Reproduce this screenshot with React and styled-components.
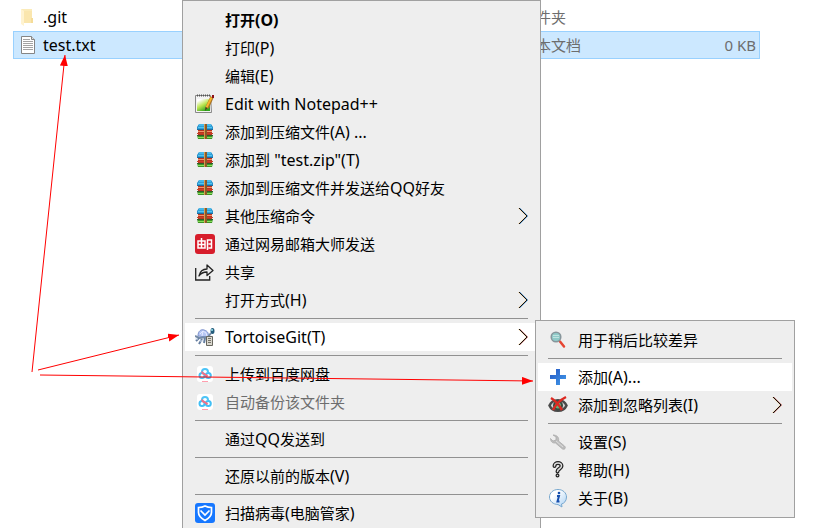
import React from "react";
import styled, { createGlobalStyle, css } from "styled-components";

const GlobalStyle = createGlobalStyle`
  * { box-sizing: border-box; }
  body {
    margin: 0;
    background: #fff;
    color: #000;
    font: 15px/28px "Noto Sans", "Noto Sans CJK SC", sans-serif;
  }
`;

const Desktop = styled.main`
  position: relative;
  height: 100vh;
  overflow: hidden;
  padding: 3px 80px 0 13px;
`;

const FileTable = styled.table`
  width: 100%;
  table-layout: fixed;
  border-collapse: collapse;
`;

const FileRow = styled.tr`
  height: 28px;
  line-height: 24px;
  ${(p) =>
    p.$selected &&
    css`
      background: #cce8ff;
      outline: 1px solid #99d1ff;
      outline-offset: -1px;
    `}
`;

const Cell = styled.td`
  width: ${(p) => p.$width};
  padding: 0 4px 0 0;
  color: ${(p) => (p.$muted ? "#6d6d6d" : "#000")};
  text-align: ${(p) => p.$align || "left"};
  white-space: nowrap;
`;

const FileName = styled.span`
  display: flex;
  align-items: center;
  gap: 6px;
  padding-left: 6px;
`;

const Latin = styled.span`
  font-size: 16px;
  line-height: 20px;
`;

const Menu = styled.div`
  position: absolute;
  left: ${(p) => p.$x}px;
  top: ${(p) => p.$y}px;
  min-width: ${(p) => p.$minWidth}px;
  padding: 5px 2px;
  border: 1px solid #a0a0a0;
  background: #eee;
`;

const MenuButton = styled.button`
  display: flex;
  align-items: center;
  gap: 10px;
  width: 100%;
  height: 28px;
  padding: 0 10px;
  border: 0;
  background: ${(p) => (p.$active ? "#fff" : "transparent")};
  color: #000;
  font: inherit;
  font-weight: ${(p) => (p.$bold ? 700 : 400)};
  text-align: left;
  white-space: nowrap;
  &:disabled {
    color: #6d6d6d;
  }
`;

const IconSlot = styled.span`
  display: flex;
  flex: 0 0 20px;
  align-items: center;
  justify-content: center;
  height: 20px;
`;

const Label = styled.span`
  flex: 1;
`;

const Divider = styled.hr`
  height: 1px;
  margin: 4px 10px;
  border: 0;
  background: #919191;
`;

const Overlay = styled.svg`
  position: absolute;
  left: 0;
  top: 0;
  pointer-events: none;
`;

// Latin runs are set one pixel larger than the Chinese text around them.
const MixedText = ({ children }) =>
  children
    .split(/([\x20-\x7e]+)/)
    .filter(Boolean)
    .map((run, i) => (/^[\x20-\x7e]/.test(run) ? <Latin key={i}>{run}</Latin> : run));

const Svg = ({ children, size = 20 }) => (
  <svg width={size} height={size} viewBox={`0 0 ${size} ${size}`} fill="none" aria-hidden="true">
    {children}
  </svg>
);

const FolderIcon = () => (
  <svg width="18" height="20" viewBox="0 0 18 20" aria-hidden="true">
    <path d="M2 2h11v14H2z" fill="#fbebb9" />
    <path d="M2 2l3 2v15l-3-2z" fill="#fff3d0" />
    <path d="M5 4h8v12H5z" fill="#fae6ae" />
    <path d="M12 11h2v5h-2z" fill="#f5dc98" />
  </svg>
);

const TextFileIcon = () => (
  <svg width="18" height="20" viewBox="0 0 18 20" aria-hidden="true">
    <path d="M2.500 1.500h10l3 3v14h-13z" fill="#fff" stroke="#858585" />
    <path d="M12.500 1.500v3h3" fill="#ddd" stroke="#858585" />
    <path d="M4 4.500h7M4 6.500h10M4 8.500h10M4 10.500h10M4 12.500h10M4 14.500h10" stroke="#a3a3a3" />
  </svg>
);

const NotepadIcon = () => (
  <Svg>
    <defs>
      <linearGradient id="noteGreen" x1="0" y1="0" x2="0.600" y2="1">
        <stop offset="0.150" stopColor="#fff" />
        <stop offset="0.550" stopColor="#bfe654" />
        <stop offset="1" stopColor="#2fa51c" />
      </linearGradient>
    </defs>
    <path d="M0.500 1.500h15l1 17h-16z" fill="#f4f4f4" stroke="#888" />
    <path d="M2 5h13v12H2z" fill="url(#noteGreen)" />
    <path d="M2 1.500h13" stroke="#555" strokeWidth="2" strokeDasharray="1 1" />
    <path d="M17 3L12 14" stroke="#a87324" strokeWidth="3.500" />
    <path d="M16.500 3.500L11.500 13.500" stroke="#f8b42c" strokeWidth="2" />
    <path d="M10.500 13l2 1-2.500 3z" fill="#4a3a20" />
    <path d="M17 1h2v3h-2z" fill="#8d0d16" />
  </Svg>
);

const ArchiveIcon = () => (
  <Svg>
    <path d="M4 2h12l2 3v3H2V5z" fill="#2490cc" />
    <path d="M4 3h12M3 5.500h14" stroke="#52c5f2" strokeWidth="1.500" />
    <path d="M2 7.500h16" stroke="#1e6b9c" />
    <path d="M3 8h14v5H3z" fill="#b93421" />
    <path d="M3 9.500h14" stroke="#f09468" />
    <path d="M2 11.500h16" stroke="#cb4026" />
    <path d="M2 13h16l-1 4H3z" fill="#3c9427" />
    <path d="M2 13.500h16" stroke="#315c28" />
    <path d="M3 15.500h14" stroke="#89dd59" />
    <path d="M9 2h3v15H9z" fill="#8b5a28" />
    <path d="M9.500 2v15" stroke="#d79c4e" />
  </Svg>
);

const MailIcon = () => (
  <Svg>
    <rect width="20" height="20" rx="3" fill="#d71d2b" />
    <path d="M3 7h7v7H3zM3 10.500h7M6.500 4v10" stroke="#fff" strokeWidth="1.500" />
    <path d="M12.500 16V6h4v4h-3M16.500 10v4h-3" stroke="#fff" strokeWidth="1.500" />
  </Svg>
);

const ShareIcon = () => (
  <Svg>
    <path d="M0.700 6v12h14v-4" stroke="#222" strokeWidth="1.300" />
    <path d="M4 14c1-5 4-7 8-7V3l6 5.500-6 5V10c-3 0-6 1-8 4z" stroke="#222" strokeWidth="1.300" strokeLinejoin="round" />
  </Svg>
);

const TortoiseIcon = () => (
  <Svg>
    <path d="M3 9C3 4 6 2 9 3c4 1 5 4 4 7z" fill="#b6c6f4" stroke="#7c91cb" />
    <path d="M5 7l3-3 3 2 1 3M8 4l-1 5" stroke="#e3e9ff" />
    <path d="M0 9l4 2 9-1 3-4" stroke="#758ba6" strokeWidth="2" />
    <ellipse cx="17.500" cy="4" rx="2" ry="3" fill="#245c7c" />
    <circle cx="17" cy="3" r="1" fill="#9ce4ee" />
    <path d="M4 11l-3 3M7 12l-3 5M10 11l-1 5" stroke="#657ea0" strokeWidth="2" />
    <path d="M0 12h3M5 14h3" stroke="#dbe5f4" />
    <path d="M11.500 9.500h6v9h-6z" fill="#d9d7ce" stroke="#68675f" />
    <path d="M13 11.500h3M13 13.500h3M13 15.500h3" stroke="#77756c" />
  </Svg>
);

const CloudIcon = () => (
  <Svg>
    <rect x="2" y="2" width="16" height="16" rx="3" fill="#fff" />
    <path d="M7 8a3 3 0 0 1 6 0" stroke="#4cc4f7" strokeWidth="2" />
    <circle cx="7" cy="11.500" r="2.500" stroke="#41bff5" strokeWidth="2" />
    <circle cx="13.300" cy="11.500" r="2.500" stroke="#41bff5" strokeWidth="2" />
    <path d="M7 7.500c0 3 4 2 5.500 5" stroke="#f46f86" strokeWidth="2" />
    <path d="M7 17.500h6" stroke="#ff9eae" />
  </Svg>
);

const ShieldIcon = () => (
  <Svg>
    <rect width="20" height="20" rx="3" fill="#1677ff" />
    <path d="M3.500 4.500c3 0 4.500-.5 6.500-1.500 2 1 3.500 1.500 6.500 1.500v5c0 3.500-3 6-6.500 8-3.500-2-6.500-4.500-6.500-8z" stroke="#fff" strokeWidth="1.700" />
    <path d="M5.500 7.500L10 12l4.500-4.500" stroke="#fff" strokeWidth="1.700" />
  </Svg>
);

const SearchIcon = () => (
  <Svg>
    <path d="M12 11.500l4 5" stroke="#e64532" strokeWidth="2.500" strokeLinecap="round" />
    <circle cx="8" cy="7" r="4.800" fill="#8fcac8" stroke="#87959b" strokeWidth="1.500" />
    <path d="M5 5.500h6M5 7.500h6" stroke="#bfe3e0" />
  </Svg>
);

const PlusIcon = () => (
  <Svg>
    <defs>
      <linearGradient id="plusBlue" x1="0" y1="0" x2="1" y2="1">
        <stop stopColor="#2557c4" />
        <stop offset="1" stopColor="#429bea" />
      </linearGradient>
    </defs>
    <path d="M8 2h4v6h6v4h-6v6H8v-6H2V8h6z" fill="url(#plusBlue)" />
  </Svg>
);

const IgnoreIcon = () => (
  <Svg>
    <path d="M1.500 10.500c3-7 14-7 17 0-3 7-14 7-17 0z" fill="#d4d4d4" stroke="#4a4a4a" strokeWidth="2.500" />
    <circle cx="10" cy="10.500" r="4" fill="#62b27a" stroke="#3b4a40" strokeWidth="2" />
    <path d="M3 3c5 3 8 7 11 12M18 2C12 5 8 9 5 15" stroke="#dc2a22" strokeWidth="2.500" />
  </Svg>
);

const WrenchIcon = () => (
  <Svg>
    <path d="M5 3l3 2v3L5 9 2.500 6.500c0 3 2 5 5 4.500l7 6c2 1 4-1 2-3l-6-5c1-4-2-6-5.500-6z" fill="#bdbdbd" stroke="#a6a6a6" strokeWidth="0.700" />
    <path d="M8 9l7 6" stroke="#ddd" />
  </Svg>
);

const HelpIcon = () => (
  <Svg>
    <path d="M6.500 6c0-4 7-4 7 0 0 3-4 2.500-4 5.500M9.500 15.500v.1" stroke="#222" strokeWidth="4" strokeLinecap="round" />
    <path d="M6.500 6c0-4 7-4 7 0 0 3-4 2.500-4 5.500M9.500 15.500v.1" stroke="#ddd" strokeWidth="1.500" strokeLinecap="round" />
  </Svg>
);

const InfoIcon = () => (
  <Svg>
    <defs>
      <linearGradient id="infoBlue" x1="0" y1="0" x2="1" y2="1">
        <stop offset="0.300" stopColor="#fff" />
        <stop offset="1" stopColor="#a8d0f4" />
      </linearGradient>
    </defs>
    <path d="M18.500 9c0 4-2.500 6.500-5 7l.5 3-4-2.500C5 16.500 1.500 13 1.500 9S5 1.500 10 1.500s8.500 3.500 8.500 7.500z" fill="url(#infoBlue)" stroke="#78a8cf" />
    <path d="M9 8h2l-1.500 5.500h2" stroke="#174fae" strokeWidth="2" />
    <circle cx="11" cy="5" r="1.300" fill="#174fae" />
  </Svg>
);

const Chevron = ({ tint }) => (
  <svg width="10" height="18" viewBox="0 0 10 18" fill="none" aria-hidden="true">
    <path d="M0.500 1l8 8-8 8" stroke="#f0c98c" />
    <path d="M1.500 1l8 8-8 8" stroke={tint} />
    <path d="M1 1l8 8-8 8" stroke="#111" />
  </svg>
);

const MAIN_MENU = [
  { label: "打开(O)", bold: true },
  { label: "打印(P)" },
  { label: "编辑(E)" },
  { label: "Edit with Notepad++", icon: NotepadIcon },
  { label: "添加到压缩文件(A) ...", icon: ArchiveIcon },
  { label: '添加到 "test.zip"(T)', icon: ArchiveIcon },
  { label: "添加到压缩文件并发送给QQ好友", icon: ArchiveIcon },
  { label: "其他压缩命令", icon: ArchiveIcon, submenu: true },
  { label: "通过网易邮箱大师发送", icon: MailIcon },
  { label: "共享", icon: ShareIcon },
  { label: "打开方式(H)", submenu: true },
  null,
  { label: "TortoiseGit(T)", icon: TortoiseIcon, submenu: true, active: true },
  null,
  { label: "上传到百度网盘", icon: CloudIcon },
  { label: "自动备份该文件夹", icon: CloudIcon, disabled: true },
  null,
  { label: "通过QQ发送到" },
  null,
  { label: "还原以前的版本(V)" },
  null,
  { label: "扫描病毒(电脑管家)", icon: ShieldIcon },
];

const GIT_MENU = [
  { label: "用于稍后比较差异", icon: SearchIcon },
  null,
  { label: "添加(A)...", icon: PlusIcon, active: true },
  { label: "添加到忽略列表(I)", icon: IgnoreIcon, submenu: true },
  null,
  { label: "设置(S)", icon: WrenchIcon },
  { label: "帮助(H)", icon: HelpIcon },
  { label: "关于(B)", icon: InfoIcon },
];

const ContextMenu = ({ items, label, x, y, minWidth, tint = "#1674c4" }) => (
  <Menu role="menu" aria-label={label} $x={x} $y={y} $minWidth={minWidth}>
    {items.map((item, i) => {
      if (!item) return <Divider key={i} />;
      const Icon = item.icon;
      return (
        <MenuButton
          key={i}
          type="button"
          role="menuitem"
          aria-haspopup={item.submenu ? "menu" : undefined}
          disabled={item.disabled}
          $bold={item.bold}
          $active={item.active}
        >
          <IconSlot>{Icon && <Icon />}</IconSlot>
          <Label>
            <MixedText>{item.label}</MixedText>
          </Label>
          {item.submenu && <Chevron tint={item.active ? "#b03a2e" : tint} />}
        </MenuButton>
      );
    })}
  </Menu>
);

const ARROWS = [
  [32, 372, 65, 55],
  [38, 370, 179, 335],
  [40, 375, 533, 381],
];

const Arrows = () => (
  <Overlay width="540" height="400" viewBox="0 0 540 400" aria-hidden="true">
    <defs>
      <marker id="head" markerUnits="userSpaceOnUse" markerWidth="12" markerHeight="10" refX="11" refY="4" orient="auto">
        <path d="M0 0l11 4-11 4z" fill="#f00" />
      </marker>
    </defs>
    {ARROWS.map(([x1, y1, x2, y2]) => (
      <line key={y2} x1={x1} y1={y1} x2={x2} y2={y2} stroke="#f00" markerEnd="url(#head)" />
    ))}
  </Overlay>
);

export default function App() {
  return (
    <Desktop>
      <GlobalStyle />
      <FileTable>
        <tbody>
          <FileRow>
            <Cell $width="68%">
              <FileName>
                <FolderIcon />
                <Latin>.git</Latin>
              </FileName>
            </Cell>
            <Cell $muted>文件夹</Cell>
            <Cell $muted $align="right" />
          </FileRow>
          <FileRow $selected>
            <Cell>
              <FileName>
                <TextFileIcon />
                <Latin>test.txt</Latin>
              </FileName>
            </Cell>
            <Cell $muted>文本文档</Cell>
            <Cell $muted $align="right">0 KB</Cell>
          </FileRow>
        </tbody>
      </FileTable>
      <ContextMenu label="test.txt" items={MAIN_MENU} x={182} y={0} minWidth={359} />
      <ContextMenu label="TortoiseGit" items={GIT_MENU} x={535} y={320} minWidth={260} tint="#b03a2e" />
      <Arrows />
    </Desktop>
  );
}
